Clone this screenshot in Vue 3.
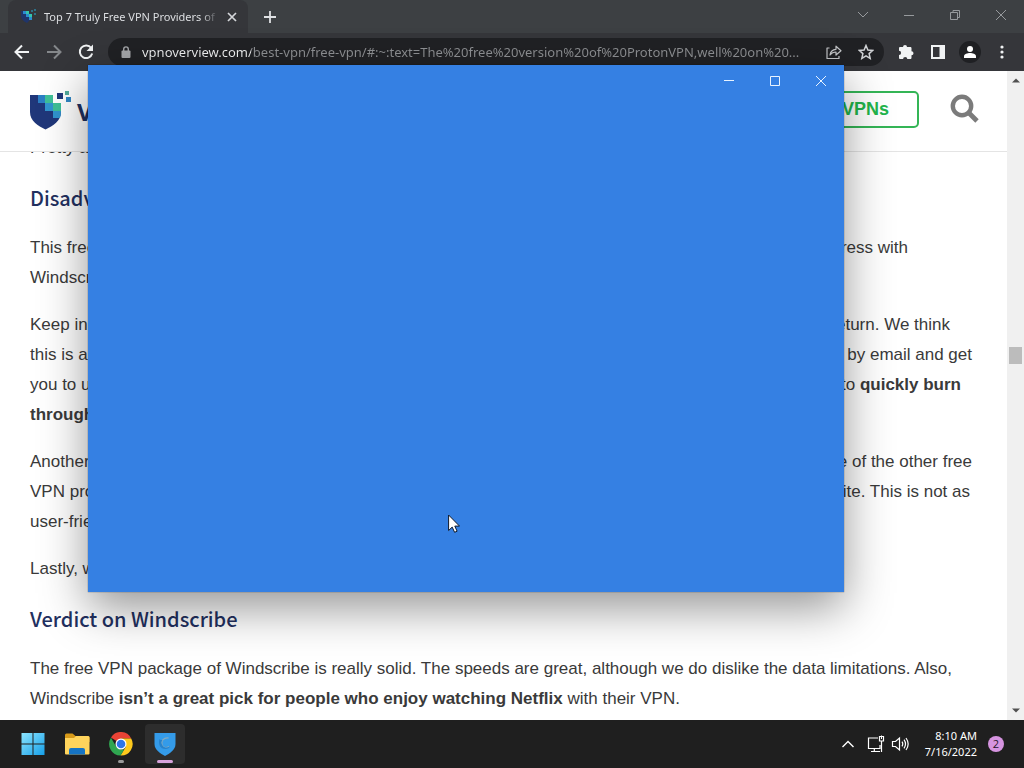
<script setup>
import { ref } from 'vue'

const address = ref('vpnoverview.com/best-vpn/free-vpn/#:~:text=The%20free%20version%20of%20ProtonVPN,well%20on%20...')

const disadvantages = [
  [
    { start: 'This free', end: 'press with', inset: 'inset-wide' },
    { start: 'Windscribe' }
  ],
  [
    { start: 'Keep in', end: 'return. We think', inset: 'inset-mid' },
    { start: 'this is a', end: 'by email and get' },
    { start: 'you to us', end: 'to', strong: 'quickly burn', inset: 'inset-small' },
    { startStrong: 'through' }
  ],
  [
    { start: 'Another', end: 'one of the other free' },
    { start: 'VPN pro', end: 'site. This is not as', inset: 'inset-tiny' },
    { start: 'user-frie' }
  ],
  [{ start: 'Lastly, w' }]
]
</script>

<template>
  <div class="desktop">
    <section class="browser">
      <header class="tabstrip">
        <div class="tab">
          <svg class="favicon" viewBox="0 0 16 16" aria-hidden="true">
            <path d="M1 2h8v2h2v6l-4 4Q1 11 1 7z" fill="#20356a" />
            <path d="M3 2h3v3H3zM6 5h3v3H6zM9 8h3v3H9z" fill="#2b8bd0" />
            <path d="M6 2h3v3H6zM9 5h3v3H9z" fill="#35c5ac" />
            <path d="M11 1h2v2h-2zM14 0h2v2h-2zM14 4h2v2h-2z" fill="#2e7188" />
          </svg>
          <span class="tab-title">Top 7 Truly Free VPN Providers of</span>
          <button class="icon-btn tab-close" aria-label="Close tab">
            <svg width="10" height="10" viewBox="0 0 10 10"><path d="M1 1l8 8M9 1L1 9" stroke="#d5d7da" stroke-width="1.7" /></svg>
          </button>
        </div>
        <button class="icon-btn new-tab" aria-label="New tab">
          <svg width="14" height="14" viewBox="0 0 14 14"><path d="M7 1v12M1 7h12" stroke="#dfe1e4" stroke-width="1.8" /></svg>
        </button>
        <div class="caption">
          <button class="icon-btn" aria-label="Search tabs"><svg width="12" height="12" viewBox="0 0 12 12"><path d="M1 3l5 5 5-5" /></svg></button>
          <button class="icon-btn" aria-label="Minimize browser"><svg width="12" height="12" viewBox="0 0 12 12"><path d="M1 6.5h10" /></svg></button>
          <button class="icon-btn" aria-label="Restore browser"><svg width="12" height="12" viewBox="0 0 12 12"><path d="M1.500 3.500h7v7h-7zM4 3.500v-2h6.500v7h-2" /></svg></button>
          <button class="icon-btn" aria-label="Close browser"><svg width="12" height="12" viewBox="0 0 12 12"><path d="M1 1l10 10M11 1L1 11" /></svg></button>
        </div>
      </header>

      <nav class="toolbar">
        <div class="nav-buttons">
          <button class="icon-btn" aria-label="Back"><svg width="16" height="16" viewBox="0 0 16 16"><path d="M15 8H2M8 1.500L1.500 8 8 14.500" fill="none" stroke="#f1f3f4" stroke-width="2" /></svg></button>
          <button class="icon-btn" aria-label="Forward"><svg width="16" height="16" viewBox="0 0 16 16"><path d="M1 8h13M8 1.500L14.500 8 8 14.500" fill="none" stroke="#85888b" stroke-width="2" /></svg></button>
          <button class="icon-btn" aria-label="Reload"><svg width="16" height="16" viewBox="0 0 16 16"><path d="M13.200 4A6.300 6.300 0 1 0 14.200 9.500" fill="none" stroke="#f1f3f4" stroke-width="2" /><path d="M15 .5v6.500H8.500z" fill="#f1f3f4" /></svg></button>
        </div>
        <div class="omnibox">
          <svg class="lock" width="10" height="12" viewBox="0 0 10 12" aria-hidden="true"><rect x=".5" y="4.500" width="9" height="7.500" rx="1" fill="#a5a7aa" /><path d="M2.700 5V3.200a2.300 2.300 0 0 1 4.600 0V5" fill="none" stroke="#a5a7aa" stroke-width="1.400" /></svg>
          <input v-model="address" class="url" type="text" aria-label="Address" spellcheck="false" />
          <button class="icon-btn" aria-label="Share"><svg width="16" height="16" viewBox="0 0 16 16"><path d="M3.500 4H1v10.500h12V12M4 11C4.500 7.500 6.500 5.500 10 5.300V2.200l5 4.500-5 4.300V8C7.500 8 5.500 9 4 11z" fill="none" stroke="#c3c5c8" stroke-width="1.200" stroke-linejoin="round" /></svg></button>
          <button class="icon-btn" aria-label="Bookmark"><svg width="16" height="16" viewBox="0 0 16 16"><path d="M8 1.500l1.900 4.500 4.900.4-3.700 3.200 1.100 4.800L8 11.900l-4.200 2.500 1.100-4.800L1.200 6.400 6.100 6z" fill="none" stroke="#d1d3d6" stroke-width="1.500" /></svg></button>
        </div>
        <div class="tools">
          <button class="icon-btn" aria-label="Extensions"><svg width="16" height="16" viewBox="0 0 16 16"><path d="M5 3a2 2 0 0 1 4 0h3.200c.8 0 1.300.5 1.300 1.300V7.200a2 2 0 0 1 0 4v2.500c0 .8-.5 1.300-1.300 1.300H9.300a2.100 2.100 0 0 0-4.200 0H2.300C1.500 15 1 14.500 1 13.700V11a2.100 2.100 0 0 0 0-4.200V4.300C1 3.500 1.500 3 2.300 3z" fill="#f1f3f4" /></svg></button>
          <button class="icon-btn" aria-label="Side panel"><svg width="14" height="14" viewBox="0 0 14 14"><path d="M1 1h12v12H1z" fill="none" stroke="#f1f3f4" stroke-width="2" /><path d="M8.500 1H13v12H8.500z" fill="#f1f3f4" /></svg></button>
          <button class="icon-btn avatar" aria-label="Profile"><svg width="12" height="12" viewBox="0 0 12 12"><circle cx="6" cy="3" r="3" fill="#fff" /><path d="M0 12V10.200C0 8 3.500 7 6 7s6 1 6 3.200V12z" fill="#fff" /></svg></button>
          <button class="icon-btn" aria-label="Browser menu"><svg width="4" height="14" viewBox="0 0 4 14" fill="#f1f3f4"><circle cx="2" cy="2" r="1.600" /><circle cx="2" cy="7" r="1.600" /><circle cx="2" cy="12" r="1.600" /></svg></button>
        </div>
      </nav>

      <div class="viewport">
        <main class="page">
          <header class="site-header">
            <a class="brand" href="#">
              <svg width="42" height="40" viewBox="0 0 42 40" aria-hidden="true">
                <path d="M0 4h23v8h8v9c0 9-8 14-15.500 17.500C8 35 0 30 0 21z" fill="#20377a" />
                <path d="M8 4h7v8H8z" fill="#2b7fc4" /><path d="M15 12h8v8h-8zM23 20h8q0 4-1 7h-7z" fill="#3195cf" />
                <path d="M15 4h8v8h-8zM23 12h8v8h-8z" fill="#3fc097" />
                <path d="M27 2h6v6h-6z" fill="#20377a" /><path d="M35 0h4v4h-4z" fill="#53ac9c" /><path d="M36 6h5v5h-5z" fill="#3187c5" />
              </svg>
              <span class="brand-name">VPN</span>
            </a>
            <div class="header-actions">
              <a class="top-link" href="#">Top 5 VPNs</a>
              <button class="icon-btn" aria-label="Search">
                <svg width="30" height="30" viewBox="0 0 30 30"><circle cx="12" cy="12" r="9.200" fill="none" stroke="#7b7b7b" stroke-width="4.400" /><path d="M18.500 18.500l8.500 8.500" stroke="#7b7b7b" stroke-width="4.800" /></svg>
              </button>
            </div>
          </header>
          <div class="scroll-area">
            <article class="article">
              <p>Pretty a</p>
              <h3>Disadv</h3>
              <p v-for="(paragraph, i) in disadvantages" :key="i">
                <span v-for="(line, j) in paragraph" :key="j" class="line">
                  <span class="line-start">{{ line.start }}<b>{{ line.startStrong }}</b></span>
                  <span v-if="line.end" class="line-end" :class="line.inset">{{ line.end }} <b v-if="line.strong">{{ line.strong }}</b></span>
                </span>
              </p>
              <h3>Verdict on Windscribe</h3>
              <p>The free VPN package of Windscribe is really solid. The speeds are great, although we do dislike the data limitations. Also, Windscribe <b>isn’t a great pick for people who enjoy watching Netflix</b> with their VPN.</p>
            </article>
          </div>
        </main>
        <div class="scrollbar" aria-hidden="true">
          <svg width="8" height="5" viewBox="0 0 8 5"><path d="M0 4.500L4 .5l4 4z" fill="#505050" /></svg>
          <div class="track"><div class="thumb"></div></div>
          <svg width="8" height="5" viewBox="0 0 8 5"><path d="M0 .5h8l-4 4z" fill="#505050" /></svg>
        </div>
      </div>
    </section>

    <section class="app-window" aria-label="Application">
      <div class="app-caption">
        <button class="icon-btn" aria-label="Minimize"><svg width="12" height="12" viewBox="0 0 12 12"><path d="M1 5.500h10" /></svg></button>
        <button class="icon-btn" aria-label="Maximize"><svg width="12" height="12" viewBox="0 0 12 12"><path d="M1.500 1.500h9v9h-9z" /></svg></button>
        <button class="icon-btn" aria-label="Close"><svg width="12" height="12" viewBox="0 0 12 12"><path d="M1 1l10 10M11 1L1 11" /></svg></button>
      </div>
    </section>

    <svg class="cursor" width="12" height="19" viewBox="0 0 12 19" aria-hidden="true"><path d="M.6 1v15.500l3.600-3.400 2.400 5.200 2.500-1.100-2.300-5.100h4.700z" fill="#fff" stroke="#101828" /></svg>

    <footer class="taskbar">
      <div class="apps">
        <button class="task" aria-label="Start">
          <svg width="24" height="24" viewBox="0 0 24 24">
            <defs><linearGradient id="win" x2="1" y2="1"><stop stop-color="#8ce5ff" /><stop offset="1" stop-color="#169fe8" /></linearGradient></defs>
            <path d="M.5 1h11v10.500H.5zM12.500 1h11v10.500h-11zM.5 12.500h11V23H.5zM12.500 12.500h11V23h-11z" fill="url(#win)" />
          </svg>
        </button>
        <button class="task" aria-label="File Explorer">
          <svg width="26" height="24" viewBox="0 0 26 24">
            <path d="M1 3q0-1.500 1.500-1.500h6L11.500 4H24q1.500 0 1.500 1.500V10H1z" fill="#d79a19" />
            <path d="M1 6h9l2-2h12q1.500 0 1.500 1.500V21.500q0 1-1 1H2q-1 0-1-1z" fill="#ffd45c" />
            <path d="M5 22.500V18q0-2 2-2h12q2 0 2 2v4.500z" fill="#1674c4" />
          </svg>
        </button>
        <button class="task open" aria-label="Chrome">
          <svg width="24" height="24" viewBox="0 0 24 24">
            <path d="M12 12L2 5.500A11.500 11.500 0 0 1 22.200 6.500H12z" fill="#e94335" />
            <path d="M12 6.500h10.200A11.500 11.500 0 0 1 11.500 23.500L17 14.500z" fill="#fdc91c" />
            <path d="M2 5.800L7.200 14.800l4.800 2.700h3.200L11.500 23.500A11.500 11.500 0 0 1 2 5.800z" fill="#2fa650" />
            <circle cx="12" cy="12" r="5.500" fill="#fff" /><circle cx="12" cy="12" r="4.300" fill="#2d75e8" />
          </svg>
        </button>
        <button class="task open active" aria-label="Shield app">
          <svg width="22" height="24" viewBox="0 0 22 24">
            <path d="M.5 1h21v11c0 6-6 9.500-10.500 12C6.500 21.500.5 18 .5 12z" fill="#349be9" />
            <path d="M14.500 6C9.500 5.500 6.500 9 8 13c1.200 3 4.500 3.500 7 1.500" fill="none" stroke="#86a9bd" stroke-width="1.300" />
            <path d="M5.500 7c-1.500 5 .5 10 6 10 2.500 0 4-1 4.500-2.500-2.500 1.500-6 1.500-7.500-1C7 11.500 7 9.500 8.500 8c-1.500 0-2.500 0-3-1z" fill="#2682cc" />
          </svg>
        </button>
      </div>
      <div class="tray">
        <button class="icon-btn" aria-label="Hidden icons"><svg width="14" height="14" viewBox="0 0 14 14"><path d="M1.500 10L7 4.500l5.500 5.500" fill="none" stroke="#fff" stroke-width="1.400" /></svg></button>
        <button class="icon-btn status" aria-label="Network and sound">
          <svg width="18" height="18" viewBox="0 0 18 18"><path d="M11 3H1.500v10.500H13V10M7.300 13.500V16M4 16.500h9M12.500 1.500h4V6h-4zM14.500 6v11" fill="none" stroke="#fff" stroke-width="1.200" /><path d="M14 .5h1V4h-1z" fill="#fff" /></svg>
          <svg width="18" height="18" viewBox="0 0 18 18"><path d="M1.500 6.500h3L8.500 3v12l-4-3.500h-3zM11 6.700q1.500 2.300 0 4.600M13 4.700q3 4.300 0 8.600M15 3q4.300 6 0 12" fill="none" stroke="#fff" stroke-width="1.200" /></svg>
        </button>
        <div class="clock"><time>8:10 AM</time><time>7/16/2022</time></div>
        <button class="badge" aria-label="2 notifications">2</button>
      </div>
    </footer>
  </div>
</template>

<style>
body { margin: 0; }
</style>

<style scoped>
.desktop {
  position: relative;
  display: flex;
  flex-direction: column;
  height: 100vh;
  overflow: hidden;
  font-family: "Open Sans", "Noto Sans", sans-serif;
}
.icon-btn {
  display: flex;
  align-items: center;
  justify-content: center;
  padding: 0;
  border: 0;
  background: transparent;
}
.browser { flex: 1; min-height: 0; display: flex; flex-direction: column; }
.tabstrip { display: flex; align-items: center; height: 33px; padding-left: 8px; background: #3d4043; }
.tab {
  display: flex;
  align-items: center;
  align-self: stretch;
  box-sizing: border-box;
  width: 240px;
  padding: 0 7px 0 12px;
  border-radius: 8px 8px 0 0;
  background: #35363a;
}
.favicon { width: 16px; height: 16px; margin-right: 8px; flex: none; }
.tab-title {
  flex: 1;
  overflow: hidden;
  font-family: "Noto Sans", sans-serif;
  font-size: 11px;
  white-space: nowrap;
  color: #dcdee1;
  mask-image: linear-gradient(to right, #000 90%, transparent);
}
.tab-close { width: 18px; height: 18px; margin-left: 4px; }
.new-tab { width: 28px; height: 28px; margin-left: 8px; }
.caption { display: flex; align-self: stretch; margin-left: auto; padding-bottom: 4px; }
.caption .icon-btn { width: 46px; }
.caption svg { fill: none; stroke: #979a9d; }
.toolbar { display: flex; align-items: center; height: 38px; background: #35363a; }
.nav-buttons { display: flex; padding: 0 6px; }
.nav-buttons .icon-btn { width: 32px; height: 28px; }
.omnibox {
  flex: 1;
  display: flex;
  align-items: center;
  min-width: 0;
  height: 28px;
  padding: 0 2px 0 13px;
  border-radius: 14px;
  background: #202124;
}
.omnibox .icon-btn { width: 32px; flex: none; }
.lock { flex: none; }
.url {
  flex: 1;
  min-width: 0;
  margin-left: 11px;
  padding: 0;
  border: 0;
  outline: 0;
  font: 13px "Noto Sans", sans-serif;
  color: transparent;
  background: linear-gradient(to right, #f4f5f6 109px, #8f9194 109px);
  background-clip: text;
}
.tools { display: flex; align-items: center; padding: 0 6px; }
.tools .icon-btn { width: 32px; height: 24px; }
.tools .avatar { width: 22px; height: 22px; margin: 0 5px; border-radius: 50%; background: #1f2023; }

.viewport { flex: 1; min-height: 0; display: flex; }
.page { flex: 1; min-width: 0; display: flex; flex-direction: column; background: #fff; }
.site-header {
  flex: none;
  display: flex;
  align-items: center;
  justify-content: space-between;
  box-sizing: border-box;
  height: 81px;
  padding: 0 27px 4px 30px;
  border-bottom: 1px solid #e4e4e4;
}
.brand { display: flex; align-items: center; gap: 5px; padding-top: 4px; text-decoration: none; }
.brand-name { font: 700 24px "Open Sans", sans-serif; color: #1f3060; }
.header-actions { display: flex; align-items: center; gap: 31px; }
.top-link {
  padding: 0 28px;
  border: 2px solid #34b556;
  border-radius: 5px;
  font: 700 18px/33px "Liberation Sans", Arial, sans-serif;
  text-decoration: none;
  color: #22b54b;
}
.scroll-area { flex: 1; min-height: 0; overflow: hidden; }
.article {
  margin-top: -19px;
  padding: 0 30px;
  font: 17px/30px "Liberation Sans", Arial, sans-serif;
  color: #3a3a3a;
}
.article p { margin: 0 0 17px; }
.article h3 {
  margin: 18px 0;
  font: 500 20px/34px "Noto Sans CJK SC", sans-serif;
  color: #22305f;
}
.line { display: flex; justify-content: space-between; padding-right: 5px; white-space: nowrap; }
.inset-wide { padding-right: 64px; }
.inset-mid { padding-right: 22px; }
.inset-small { padding-right: 11px; }
.inset-tiny { padding-right: 2px; }

.scrollbar {
  display: flex;
  flex-direction: column;
  align-items: center;
  box-sizing: border-box;
  width: 17px;
  padding: 7px 0;
  background: #f0f0f0;
}
.track { flex: 1; display: flex; flex-direction: column; padding-top: 264px; }
.thumb { width: 13px; height: 17px; background: #bcbcbc; }

.app-window {
  position: absolute;
  top: 65px;
  right: 180px;
  bottom: 176px;
  left: 88px;
  background: #3580e3;
  box-shadow: 0 0 1px rgba(0, 0, 0, 0.6), 0 16px 44px rgba(0, 0, 0, 0.42);
}
.app-caption { display: flex; justify-content: flex-end; }
.app-caption .icon-btn { width: 46px; height: 32px; }
.app-caption svg { fill: none; stroke: #e8f3ff; }
.cursor { position: absolute; top: 514px; left: 448px; }

.taskbar { position: relative; display: flex; justify-content: space-between; align-items: center; height: 48px; padding: 0 20px 0 13px; background: #1f1f1f; color: #fff; }
.apps { display: flex; gap: 4px; }
.task {
  position: relative;
  display: flex;
  align-items: center;
  justify-content: center;
  width: 40px;
  height: 40px;
  padding: 0;
  border: 0;
  border-radius: 4px;
  background: transparent;
}
.task.active { background: #2d2d2d; }
.task.open::after { content: ""; position: absolute; bottom: 1px; width: 6px; height: 3px; border-radius: 2px; background: #9a9a9a; }
.task.active::after { width: 16px; background: #d8a3dc; }
.tray { display: flex; align-items: center; }
.status { gap: 6px; margin: 0 16px 0 12px; }
.clock { display: flex; flex-direction: column; align-items: flex-end; margin-right: 11px; font-family: "Noto Sans", sans-serif; font-size: 11px; line-height: 16px; }
.badge { width: 16px; height: 16px; padding: 0; border: 0; border-radius: 50%; font: 11px/16px "Open Sans", sans-serif; color: #26152a; background: #d694e0; }
</style>
